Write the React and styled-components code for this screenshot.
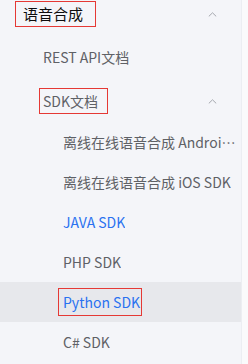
import React from "react";
import styled, { createGlobalStyle } from "styled-components";

const GlobalStyle = createGlobalStyle`
  html, body {
    margin: 0;
    padding: 0;
    background: #fafafb;
  }
  body {
    font-family: "Noto Sans CJK SC", "Liberation Sans", sans-serif;
  }
`;

const Page = styled.div`
  display: flex;
  height: 364px;
  overflow: hidden;
`;

const Sidebar = styled.nav`
  width: 242px;
  flex: none;
  background: #f4f5f9;
  border-right: 1px solid #eceef2;
  box-sizing: border-box;
`;

const Menu = styled.ul`
  list-style: none;
  margin: 0;
  padding: 0;
`;

const Title = styled.div`
  display: flex;
  align-items: center;
  height: 40px;
  margin-top: ${(p) => p.offset || 0}px;
  padding-left: ${(p) => p.indent}px;
  padding-right: 24px;
  box-sizing: border-box;
`;

const Label = styled.span`
  flex: 1;
  min-width: 0;
  display: flex;
`;

/* the red outline marks an annotated box round a title */
const Text = styled.span`
  font-size: ${(p) => (p.top ? 15 : 14)}px;
  color: ${(p) => (p.top ? "#0d0d0d" : "#5f6166")};
  line-height: 24px;
  padding: 0 ${(p) => p.padR}px 0 ${(p) => p.padL}px;
  margin-left: -${(p) => p.padL}px;
  outline: 1px solid #e53935;
`;

const Item = styled.li`
  display: flex;
  align-items: center;
  height: 40px;
  margin-top: ${(p) => p.offset || 0}px;
  padding-left: ${(p) => p.indent}px;
  padding-right: 3px;
  box-sizing: border-box;
  background: ${(p) => (p.selected ? "#e7e8ec" : "transparent")};
`;

const ItemText = styled.span`
  font-size: 14px;
  line-height: 28px;
  color: ${(p) => (p.active ? "#2a72f0" : "#5f6166")};
  white-space: nowrap;
  overflow: hidden;
  text-overflow: ellipsis;
  padding: 0 ${(p) => (p.boxed ? 2 : 0)}px 0 ${(p) => (p.boxed ? 5 : 0)}px;
  margin-left: ${(p) => (p.boxed ? -5 : 0)}px;
  outline: ${(p) => (p.boxed ? "1px solid #e53935" : "none")};
  outline-offset: -1px;
`;

const Chevron = () => (
  <svg width="9" height="5" viewBox="0 0 9 5" fill="none">
    <path d="M0.8 4.4L4.5 0.8L8.2 4.4" stroke="#a4a7ad" strokeWidth="1" />
  </svg>
);

const leaves = [
  { name: "离线在线语音合成 Android SDK" },
  { name: "离线在线语音合成 iOS SDK" },
  { name: "JAVA SDK", active: true },
  { name: "PHP SDK" },
  { name: "Python SDK", active: true, selected: true, boxed: true },
  { name: "C# SDK" },
];

export default function App() {
  return (
    <Page>
      <GlobalStyle />
      <Sidebar>
        <Menu>
          <li>
            <Title indent={23} offset={-6}>
              <Label>
                <Text top padL={7} padR={12}>
                  语音合成
                </Text>
              </Label>
              <Chevron />
            </Title>
            <Menu>
              <Item indent={43} offset={3}>
                <ItemText>REST API文档</ItemText>
              </Item>
              <li>
                <Title indent={43} offset={4}>
                  <Label>
                    <Text padL={3} padR={9}>
                      SDK文档
                    </Text>
                  </Label>
                  <Chevron />
                </Title>
                <Menu>
                  {leaves.map((l, i) => (
                    <Item
                      key={l.name}
                      indent={63}
                      offset={i === 0 ? 1 : 0}
                      selected={l.selected}
                    >
                      <ItemText active={l.active} boxed={l.boxed}>
                        {l.name}
                      </ItemText>
                    </Item>
                  ))}
                </Menu>
              </li>
            </Menu>
          </li>
        </Menu>
      </Sidebar>
    </Page>
  );
}
